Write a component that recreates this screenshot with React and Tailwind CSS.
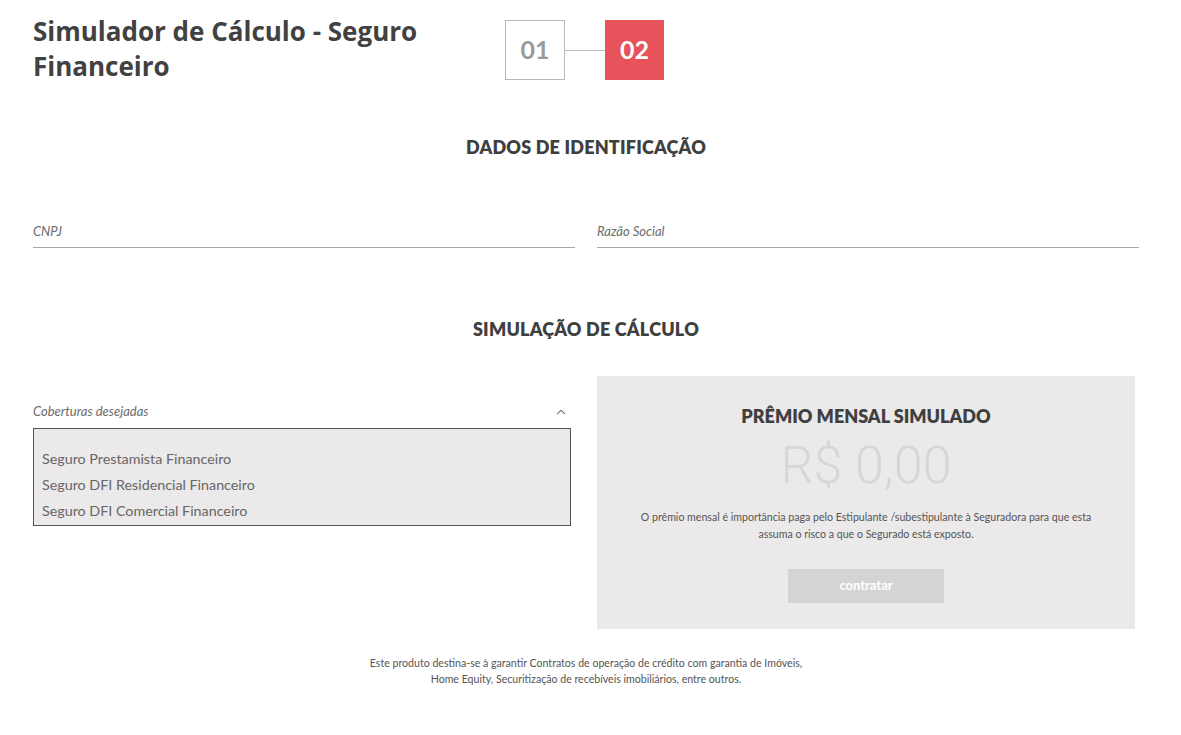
import { ChevronUp } from "lucide-react";

const coberturas = [
  "Seguro Prestamista Financeiro",
  "Seguro DFI Residencial Financeiro",
  "Seguro DFI Comercial Financeiro",
];

function Field({ label }) {
  return (
    <div className="flex-1 border-b border-[#a8a8a8] pb-[5px]">
      <span className="text-[13px] italic text-[#6b6b6b]">{label}</span>
    </div>
  );
}

export default function App() {
  return (
    <div className="min-h-[735px] bg-white font-['Lato',sans-serif] text-[#3d3d3d]">
      <div className="w-[1106px] ml-[33px]">
        {/* Header */}
        <div className="flex items-start pt-[14px]">
          <h1 className="w-[472px] font-['Open_Sans',sans-serif] text-[26px] leading-[35px] font-bold text-[#414141]">
            Simulador de Cálculo - Seguro Financeiro
          </h1>
          <div className="flex items-center mt-[6px]">
            <div className="w-[60px] h-[60px] border border-[#b8b8b8] flex items-center justify-center text-[25px] font-bold text-[#9a9a9a]">
              01
            </div>
            <div className="w-[40px] h-[1px] bg-[#bdbdbd]" />
            <div className="w-[59px] h-[60px] bg-[#e7525b] flex items-center justify-center text-[25px] font-bold text-white">
              02
            </div>
          </div>
        </div>

        {/* Dados */}
        <h2 className="mt-[50px] text-center text-[18px] font-extrabold tracking-[0.2px] text-[#3f3f3f]">
          DADOS DE IDENTIFICAÇÃO
        </h2>
        <div className="mt-[57px] flex gap-[22px]">
          <Field label="CNPJ" />
          <Field label="Razão Social" />
        </div>

        {/* Simulação */}
        <h2 className="mt-[68px] text-center text-[18px] font-extrabold tracking-[0.2px] text-[#3f3f3f]">
          SIMULAÇÃO DE CÁLCULO
        </h2>
        <div className="mt-[33px] flex gap-[26px] items-start">
          <div className="w-[538px] pt-[26px]">
            <div className="flex items-center justify-between pr-[3px]">
              <span className="text-[13px] italic text-[#6b6b6b]">Coberturas desejadas</span>
              <ChevronUp size={14} strokeWidth={1.8} className="text-[#555]" />
            </div>
            <div className="mt-[6px] border border-[#555] bg-[#ebe9e9] pt-[17px] pb-[1px] px-[8px] text-[14.3px] text-[#666] leading-[26px]">
              {coberturas.map((c) => (
                <div key={c}>{c}</div>
              ))}
            </div>
          </div>
          <div className="w-[538px] h-[253px] bg-[#ebe9e9] flex flex-col items-center pt-[27px]">
            <h3 className="text-[18px] font-extrabold text-[#3f3f3f]">PRÊMIO MENSAL SIMULADO</h3>
            <div className="mt-[8px] font-['Roboto',sans-serif] font-light text-[52px] leading-[56px] text-[#d6d6d6]">
              R$ 0,00
            </div>
            <p className="mt-[15px] text-center text-[10.6px] leading-[17px] text-[#555] px-[30px]">
              O prêmio mensal é importância paga pelo Estipulante /subestipulante à Seguradora para que esta
              <br />
              assuma o risco a que o Segurado está exposto.
            </p>
            <button className="mt-[26px] w-[156px] h-[34px] bg-[#d4d4d4] text-white text-[13px] font-bold">
              contratar
            </button>
          </div>
        </div>

        <p className="mt-[26px] text-center text-[10.6px] leading-[16px] text-[#555]">
          Este produto destina-se à garantir Contratos de operação de crédito com garantia de Imóveis,
          <br />
          Home Equity, Securitização de recebíveis imobiliários, entre outros.
        </p>
      </div>
    </div>
  );
}
